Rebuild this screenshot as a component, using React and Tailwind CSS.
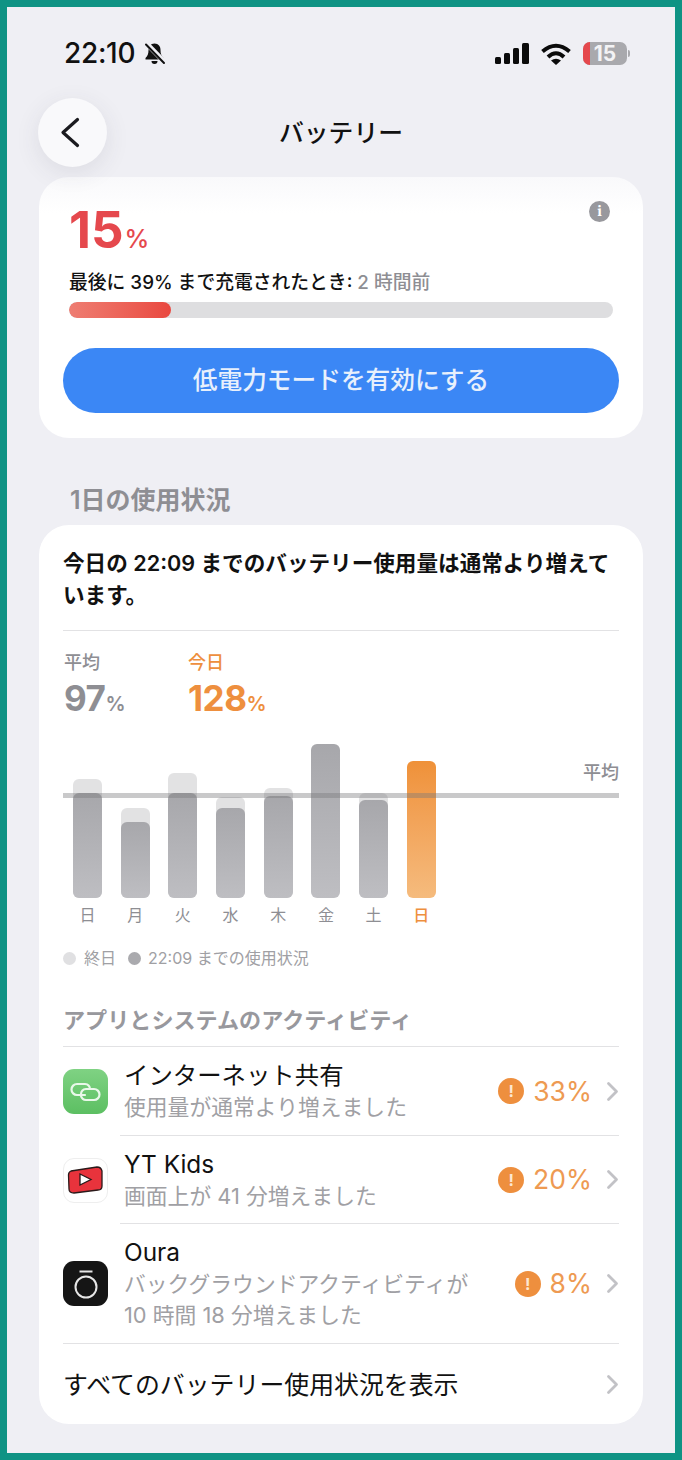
import React from 'react'

const FONT = { fontFamily: '"Inter", "Noto Sans CJK JP", sans-serif' }

const bars = [
  { day: '日', full: 119, part: 105 },
  { day: '月', full: 90, part: 76 },
  { day: '火', full: 125, part: 105 },
  { day: '水', full: 101, part: 90 },
  { day: '木', full: 110, part: 102 },
  { day: '金', full: 0, part: 154 },
  { day: '土', full: 105, part: 98 },
]

const apps = [
  { name: 'インターネット共有', note: ['使用量が通常より増えました'], pct: '33%', icon: <HotspotIcon />, height: 'h-[89px]' },
  { name: 'YT Kids', note: ['画面上が 41 分増えました'], pct: '20%', icon: <KidsIcon />, height: 'h-[88px]' },
  { name: 'Oura', note: ['バックグラウンドアクティビティが', '10 時間 18 分増えました'], pct: '8%', icon: <OuraIcon />, height: 'h-[119px]' },
]

function HotspotIcon() {
  return (
    <div className="flex h-[45px] w-[45px] items-center justify-center rounded-[11px] bg-gradient-to-b from-[#7fd283] to-[#5cbf62]">
      <svg width="33" height="24" viewBox="0 0 33 24" fill="none" stroke="#eaf8ea" strokeWidth="2.2" strokeLinecap="round">
        <path d="M16 15 H8 A5.500 5.500 0 0 1 8 4 H16 A5.500 5.500 0 0 1 21 9" />
        <path d="M12 14 A5.500 5.500 0 0 1 17 9 H25 A5.500 5.500 0 0 1 25 20 H17 A5.500 5.500 0 0 1 12 16" />
      </svg>
    </div>
  )
}

function KidsIcon() {
  return (
    <div className="flex h-[45px] w-[45px] items-center justify-center rounded-[11px] border border-[#eeeeee] bg-white">
      <svg width="37" height="30" viewBox="0 0 37 30">
        <path d="M4 6 L30 2 Q34 2 35 6 L35 21 Q35 25 31 25 L7 28 Q2 28 2 24 L1.500 10 Q1.500 7 4 6 Z" fill="#e8333c" stroke="#2a1a1a" strokeWidth="1.300" />
        <path d="M13 9 L24 14.500 L13 20 Z" fill="#fff" stroke="#2a1a1a" strokeWidth="1.300" />
      </svg>
    </div>
  )
}

function OuraIcon() {
  return (
    <div className="flex h-[45px] w-[45px] items-center justify-center rounded-[11px] bg-[#151515]">
      <svg width="26" height="30" viewBox="0 0 26 30" fill="none" stroke="#e6e6e6">
        <circle cx="13" cy="18" r="10.500" strokeWidth="2" />
        <path d="M6.500 2.500 H19.500" strokeWidth="2" />
      </svg>
    </div>
  )
}

function MutedBell() {
  return (
    <svg width="23" height="23" viewBox="0 0 23 23" className="shrink-0">
      <path d="M11.500 1.500 C7.500 1.500 5.500 4.500 5.500 8 C5.500 12 4.500 14 2.500 16 V17.500 H20.500 V16 C18.500 14 17.500 12 17.500 8 C17.500 4.500 15.500 1.500 11.500 1.500 Z" fill="#111" />
      <path d="M8.500 19 A3 3 0 0 0 14.500 19 Z" fill="#111" />
      <path d="M3.500 1.500 L21.500 20" stroke="#efeff4" strokeWidth="5" />
      <path d="M3 2.500 L21 21" stroke="#111" strokeWidth="2" strokeLinecap="round" />
    </svg>
  )
}

function SignalBars() {
  return (
    <svg width="34" height="21" viewBox="0 0 34 21" fill="#0b0b0b">
      <rect x="0" y="14" width="6" height="7" rx="1.500" />
      <rect x="9" y="10" width="6" height="11" rx="1.500" />
      <rect x="18" y="5" width="6" height="16" rx="1.500" />
      <rect x="27" y="0" width="7" height="21" rx="1.500" />
    </svg>
  )
}

function Wifi() {
  return (
    <svg width="30" height="22" viewBox="0 0 30 22" fill="none" stroke="#0b0b0b" strokeWidth="4">
      <path d="M1.500 8.500 Q15 -3 28.500 8.500" />
      <path d="M7 14 Q15 6.500 23 14" />
      <path d="M10 17.500 L15 22 L20 17.500 Q15 14 10 17.500 Z" fill="#0b0b0b" stroke="none" />
    </svg>
  )
}

function Battery() {
  return (
    <div className="flex items-center gap-[1px]">
      <div className="relative flex h-[23px] w-[44px] items-center justify-center overflow-hidden rounded-[7px] bg-[#a9a9ad]">
        <div className="absolute left-0 top-0 h-full w-[7px] bg-[#e5484d]" />
        <span className="relative text-[21px] font-bold leading-none text-[#f3f3f5]">15</span>
      </div>
      <div className="h-[7px] w-[2px] rounded-r bg-[#a9a9ad]" />
    </div>
  )
}

function Warn() {
  return (
    <span className="flex h-[26px] w-[26px] items-center justify-center rounded-full bg-[#ee8f3e] text-[16px] font-bold leading-none text-[#fde7d2]">!</span>
  )
}

function RowChevron() {
  return (
    <svg width="13" height="21" viewBox="0 0 13 21" fill="none" stroke="#c2c2c6" strokeWidth="2.800" strokeLinecap="round" strokeLinejoin="round" className="shrink-0">
      <path d="M2.500 2.500 L10.500 10.500 L2.500 18.500" />
    </svg>
  )
}

export default function App() {
  return (
    <div style={FONT} className="h-[1460px] w-[682px] overflow-hidden border-[7px] border-[#0f9384] bg-[#efeff4] text-[#111]">
      <div className="flex h-[84px] items-start justify-between pl-[57px] pr-[45px] pt-[31px]">
        <div className="flex items-center gap-[8px]">
          <span className="text-[28px] font-medium leading-[30px] tracking-[-0.3px]">22:10</span>
          <MutedBell />
        </div>
        <div className="flex items-center gap-[12px] pt-[4px]">
          <SignalBars />
          <Wifi />
          <Battery />
        </div>
      </div>

      <div className="relative flex h-[86px] items-start justify-center pt-[26px]">
        <div className="absolute left-[31px] top-[7px] flex h-[69px] w-[69px] items-center justify-center rounded-full bg-[#f9f9fb] shadow-[0_6px_24px_rgba(60,60,80,0.10)]">
          <svg width="21" height="31" viewBox="0 0 21 31" fill="none" stroke="#1b1b1f" strokeWidth="3.200" strokeLinecap="round" strokeLinejoin="round" className="-ml-[4px]">
            <path d="M17.500 2.500 L3 15.500 L17.500 28.500" />
          </svg>
        </div>
        <h1 className="text-[24.800px] font-medium leading-[32px]">バッテリー</h1>
      </div>

      <div className="mx-[32px] h-[261px] rounded-[30px] bg-gradient-to-b from-[#f9f9fb] to-white to-[14%] px-[24px] pt-[24px]">
        <div className="flex items-start justify-between pr-[9px]">
          <div className="flex items-baseline pl-[6px] leading-none text-[#e5484d]">
            <span className="text-[51px] font-bold leading-[58px]">15</span>
            <span className="ml-[1px] text-[25px] font-medium">%</span>
          </div>
          <span className="flex h-[21px] w-[21px] items-center justify-center rounded-full bg-[#98989d] font-serif text-[15px] font-bold leading-none text-white">i</span>
        </div>
        <p className="mt-[11px] pl-[6px] text-[18.800px] font-medium leading-[26px]">
          最後に 39% まで充電されたとき: <span className="text-[#8e8e93]">2 時間前</span>
        </p>
        <div className="ml-[6px] mt-[6px] h-[16px] w-[544px] overflow-hidden rounded-full bg-[#dedee0]">
          <div className="h-full w-[102px] rounded-full bg-gradient-to-r from-[#ee7d72] to-[#e9473f]" />
        </div>
        <button className="mt-[30px] flex h-[65px] w-[556px] items-center justify-center rounded-full bg-[#3b87f5] text-[24.700px] font-medium text-[#e8f0fc]">
          低電力モードを有効にする
        </button>
      </div>

      <h2 className="ml-[63px] mt-[45px] text-[25px] font-semibold leading-[34px] text-[#8e8e93]">1日の使用状況</h2>

      <div className="mx-[32px] mt-[8px] h-[899px] rounded-[30px] bg-white px-[24px] pt-[22px]">
        <p className="text-[21.600px] font-semibold leading-[32px]">今日の 22:09 までのバッテリー使用量は通常より増えています。</p>
        <div className="mt-[19px] h-px bg-[#e2e2e4]" />

        <div className="mt-[21px] flex gap-[63px] pl-[1px]">
          <div>
            <p className="text-[18px] font-medium leading-[22px] text-[#8e8e93]">平均</p>
            <p className="mt-[2px] text-[35px] font-bold leading-[44px] tracking-[-0.5px] text-[#8e8e93]">97<span className="text-[20px] font-semibold">%</span></p>
          </div>
          <div>
            <p className="text-[18px] font-medium leading-[22px] text-[#ee8f3e]">今日</p>
            <p className="mt-[2px] text-[35px] font-bold leading-[44px] tracking-[-0.5px] text-[#ee8f3e]">128<span className="text-[20px] font-semibold">%</span></p>
          </div>
        </div>

        <div className="relative mt-[18px] h-[154px]">
          <div className="flex h-full items-end gap-[18.700px] pl-[10px]">
            {bars.map(b => (
              <div key={b.day} className="relative h-full w-[29px]">
                {b.full > 0 && (
                  <div style={{ height: b.full }} className="absolute bottom-0 w-full rounded-[6px] bg-[#e2e2e3]" />
                )}
                <div style={{ height: b.part }} className="absolute bottom-0 w-full rounded-[6px] bg-gradient-to-b from-[#a7a7ab] to-[#bebec2]" />
              </div>
            ))}
            <div className="relative h-[137px] w-[29px] rounded-[6px] bg-gradient-to-b from-[#ef9138] to-[#f5bb7d]" />
          </div>
          <div className="absolute left-0 right-0 top-[49px] h-[5px] bg-[#77777a]/40" />
          <span className="absolute right-0 top-[18px] text-[18px] font-medium leading-[22px] text-[#8e8e93]">平均</span>
        </div>

        <div className="mt-[6px] flex gap-[18.700px] pl-[10px] text-[16px] leading-[22px] text-[#8e8e93]">
          {bars.map((b, i) => (
            <span key={i} className="w-[29px] text-center">{b.day}</span>
          ))}
          <span className="w-[29px] text-center font-medium text-[#ee8f3e]">日</span>
        </div>

        <div className="mt-[21px] flex items-center text-[16px] leading-[22px] text-[#a0a0a4]">
          <span className="h-[13px] w-[13px] rounded-full bg-[#e0e0e2]" />
          <span className="ml-[8px]">終日</span>
          <span className="ml-[12px] h-[13px] w-[13px] rounded-full bg-[#aaaaae]" />
          <span className="ml-[7px]">22:09 までの使用状況</span>
        </div>

        <h3 className="mt-[36px] text-[22.100px] font-semibold leading-[30px] text-[#98989d]">アプリとシステムのアクティビティ</h3>
        <div className="mt-[11px] h-px bg-[#e2e2e4]" />

        {apps.map((app, i) => (
          <div key={app.name} className={`flex items-center ${app.height}`}>
            <div className="w-[57px] shrink-0">{app.icon}</div>
            <div className={`flex h-full min-w-0 flex-1 items-center pl-[4px] ${i < 2 ? 'border-b border-[#e2e2e4]' : ''}`}>
              <div className="min-w-0 flex-1">
                <p className="text-[24.400px] leading-[33px]">{app.name}</p>
                {app.note.map(line => (
                  <p key={line} className="text-[21.800px] leading-[31px] text-[#a0a0a4]">{line}</p>
                ))}
              </div>
              <Warn />
              <span className="ml-[9px] text-[26.500px] leading-none text-[#ee9a52]">{app.pct}</span>
              <div className="ml-[14px]"><RowChevron /></div>
            </div>
          </div>
        ))}

        <div className="flex h-[82px] items-center justify-between border-t border-[#e2e2e4]">
          <span className="text-[24.900px] leading-[32px]">すべてのバッテリー使用状況を表示</span>
          <RowChevron />
        </div>
      </div>
    </div>
  )
}
